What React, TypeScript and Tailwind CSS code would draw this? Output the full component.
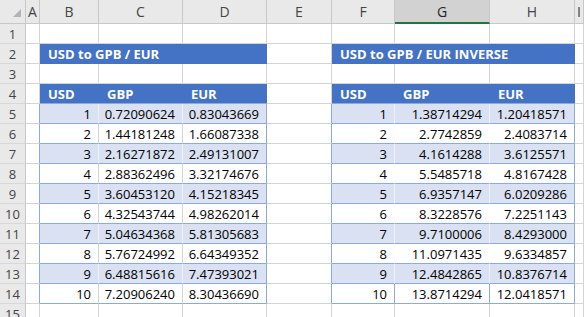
const left = [
  ["1", "0.72090624", "0.83043669"],
  ["2", "1.44181248", "1.66087338"],
  ["3", "2.16271872", "2.49131007"],
  ["4", "2.88362496", "3.32174676"],
  ["5", "3.60453120", "4.15218345"],
  ["6", "4.32543744", "4.98262014"],
  ["7", "5.04634368", "5.81305683"],
  ["8", "5.76724992", "6.64349352"],
  ["9", "6.48815616", "7.47393021"],
  ["10", "7.20906240", "8.30436690"],
];

const right = [
  ["1", "1.38714294", "1.20418571"],
  ["2", "2.7742859", "2.4083714"],
  ["3", "4.1614288", "3.6125571"],
  ["4", "5.5485718", "4.8167428"],
  ["5", "6.9357147", "6.0209286"],
  ["6", "8.3228576", "7.2251143"],
  ["7", "9.7100006", "8.4293000"],
  ["8", "11.0971435", "9.6334857"],
  ["9", "12.4842865", "10.8376714"],
  ["10", "13.8714294", "12.0418571"],
];

const letters = ["A", "B", "C", "D", "E", "F", "G", "H", "I"];

function RowHead({ n }: { n: number }) {
  return (
    <div className="flex h-[20px] items-center justify-center border-r border-b border-r-[#c8c8c8] border-b-[#d8d8d8] bg-[#e9e9e9] pt-[1px] text-[#444]">
      {n}
    </div>
  );
}

function Blank({ cls = "" }: { cls?: string }) {
  return <div className={`h-[20px] border-r border-b border-[#d4d4d4] bg-white ${cls}`} />;
}

function Num({ v, cls }: { v: string; cls: string }) {
  return (
    <div className={`flex h-[20px] items-center justify-end border-r border-b pr-[7px] pt-[2px] text-black ${cls}`}>
      {v}
    </div>
  );
}

export default function App() {
  return (
    <div className="h-[317px] w-[584px] overflow-hidden bg-white font-['Open_Sans',sans-serif] text-[13px] leading-none">
      <div className="grid grid-cols-[26px_14px_59px_84px_84px_65px_63px_95px_85px_1fr]">
        {/* column headers */}
        <div className="flex h-[24px] items-end justify-end border-r border-b border-[#c8c8c8] bg-[#e9e9e9] pb-[6px] pr-[4px]">
          <svg width="8" height="8" viewBox="0 0 8 8">
            <polygon points="8,0 8,8 0,8" fill="#b4b4b4" />
          </svg>
        </div>
        {letters.map((l) =>
          l === "G" ? (
            <div
              key={l}
              className="flex h-[24px] items-center justify-center border-r border-b-2 border-r-[#c8c8c8] border-b-[#217346] bg-[#d2d2d2] pt-[1px] text-[14px] text-[#262626]"
            >
              {l}
            </div>
          ) : (
            <div
              key={l}
              className="flex h-[24px] items-center justify-center border-r border-b border-[#c8c8c8] bg-[#e9e9e9] text-[14px] text-[#444]"
            >
              {l}
            </div>
          )
        )}

        {/* row 1 */}
        <RowHead n={1} />
        {letters.map((l) => (
          <Blank key={l} />
        ))}

        {/* row 2 */}
        <RowHead n={2} />
        <Blank />
        <div className="col-span-3 flex h-[20px] items-center bg-[#4472c4] pl-[8px] pt-[1px] font-bold text-white">
          USD to GPB / EUR
        </div>
        <Blank />
        <div className="col-span-3 flex h-[20px] items-center bg-[#4472c4] pl-[8px] pt-[1px] font-bold text-white">
          USD to GPB / EUR INVERSE
        </div>
        <Blank />

        {/* row 3 */}
        <RowHead n={3} />
        {letters.map((l) => (
          <Blank key={l} />
        ))}

        {/* row 4 */}
        <RowHead n={4} />
        <Blank />
        {["USD", "GBP", "EUR"].map((h) => (
          <div key={"l" + h} className="flex h-[20px] items-center border-b border-[#8ea9db] bg-[#4472c4] pl-[8px] pt-[1px] font-bold text-white">
            {h}
          </div>
        ))}
        <Blank />
        {["USD", "GBP", "EUR"].map((h) => (
          <div key={"r" + h} className="flex h-[20px] items-center border-b border-[#8ea9db] bg-[#4472c4] pl-[8px] pt-[1px] font-bold text-white">
            {h}
          </div>
        ))}
        <Blank />

        {/* data rows 5-14 */}
        {left.map((row, i) => {
          const band = i % 2 === 0;
          const last = i === left.length - 1;
          const bg = band ? "bg-[#d9e1f2]" : "bg-white";
          const innerL = band ? "border-r-[#eef1f8]" : "border-r-[#d4d4d4]";
          const innerR = last ? "border-r-[#8ea9db]" : band ? "border-r-[#eef1f8]" : "border-r-white";
          const r = right[i];
          return [
            <RowHead key={"h" + i} n={i + 5} />,
            <Blank key={"a" + i} cls="border-r-[#8ea9db]" />,
            <Num key={"b" + i} v={row[0]} cls={`${bg} ${innerL} border-b-[#8ea9db]`} />,
            <Num key={"c" + i} v={row[1]} cls={`${bg} ${innerL} border-b-[#8ea9db]`} />,
            <Num key={"d" + i} v={row[2]} cls={`${bg} border-r-[#8ea9db] border-b-[#8ea9db]`} />,
            <Blank key={"e" + i} cls="border-r-[#8ea9db]" />,
            <Num key={"f" + i} v={r[0]} cls={`${bg} ${innerR} border-b-[#8ea9db]`} />,
            <Num key={"g" + i} v={r[1]} cls={`${bg} ${innerR} border-b-[#8ea9db]`} />,
            <Num key={"h2" + i} v={r[2]} cls={`${bg} border-r-[#8ea9db] border-b-[#8ea9db]`} />,
            <Blank key={"i" + i} />,
          ];
        })}

        {/* row 15 */}
        <RowHead n={15} />
        {letters.map((l) => (
          <Blank key={l} />
        ))}
      </div>
    </div>
  );
}
